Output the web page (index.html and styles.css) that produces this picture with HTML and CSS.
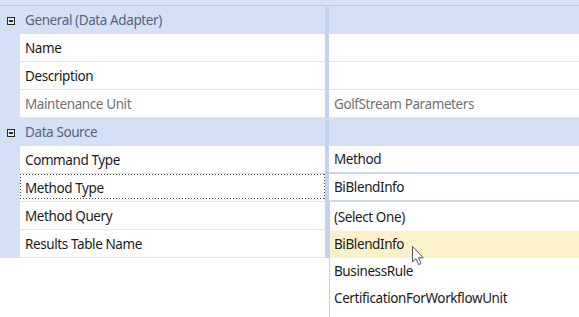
FILE: index.html
```html
<!DOCTYPE html>
<html>
<head>
<meta charset="utf-8">
<link rel="stylesheet" href="styles.css">
</head>
<body>
<div class="pg">
  <div class="topband"></div>
  <div class="grid">
    <div class="cat">
      <div class="gut"><span class="minus"></span></div>
      <div class="cat-name">General (Data Adapter)</div>
      <div class="div"></div>
      <div class="cat-val"></div>
    </div>
    <div class="row">
      <div class="gut"></div>
      <div class="name">Name</div>
      <div class="div"></div>
      <div class="val"></div>
    </div>
    <div class="row">
      <div class="gut"></div>
      <div class="name">Description</div>
      <div class="div"></div>
      <div class="val"></div>
    </div>
    <div class="row">
      <div class="gut"></div>
      <div class="name ro">Maintenance Unit</div>
      <div class="div"></div>
      <div class="val ro">GolfStream Parameters</div>
    </div>
    <div class="cat">
      <div class="gut"><span class="minus"></span></div>
      <div class="cat-name">Data Source</div>
      <div class="div"></div>
      <div class="cat-val"></div>
    </div>
    <div class="row">
      <div class="gut"></div>
      <div class="name">Command Type</div>
      <div class="div"></div>
      <div class="val edit">Method</div>
    </div>
    <div class="row">
      <div class="gut"></div>
      <div class="name focus">Method Type</div>
      <div class="div"></div>
      <div class="val edit">BiBlendInfo</div>
    </div>
    <div class="row">
      <div class="gut"></div>
      <div class="name">Method Query</div>
      <div class="div"></div>
      <div class="val"></div>
    </div>
    <div class="row">
      <div class="gut"></div>
      <div class="name">Results Table Name</div>
      <div class="div"></div>
      <div class="val"></div>
    </div>
  </div>
  <ul class="dropdown">
    <li>(Select One)</li>
    <li class="hot">BiBlendInfo</li>
    <li>BusinessRule</li>
    <li>CertificationForWorkflowUnit</li>
  </ul>
  <svg class="cursor" width="14" height="22" viewBox="0 0 14 22">
    <path d="M1.5 1.5 L1.5 17 L5 13.6 L7.6 19.6 L10 18.6 L7.5 12.8 L12.3 12.8 Z" fill="#fff" stroke="#555" stroke-width="1" stroke-linejoin="round"/>
  </svg>
</div>
</body>
</html>
```
FILE: styles.css
```css
* { box-sizing: border-box; }
html, body { margin: 0; padding: 0; background: #fff; }
body {
  font-family: "Noto Sans", "Open Sans", sans-serif;
  font-size: 13.5px;
  letter-spacing: -0.4px;
  color: #1b1b24;
}
.pg {
  position: relative;
  width: 579px;
  height: 317px;
  overflow: hidden;
  background: #fff;
}
.topband {
  height: 6px;
  background: #d7e2f6;
  border-bottom: 1px solid #bccbe7;
}
.grid { display: flex; flex-direction: column; }
.cat, .row {
  display: flex;
  height: 28px;
}
.gut {
  width: 20px;
  flex: none;
  background: #d4e0f5;
  display: flex;
  align-items: center;
  justify-content: flex-start;
}
.minus {
  display: block;
  width: 8px;
  height: 8px;
  margin: 2px 0 0 7px;
  border: 1px solid #2a2a2a;
  background: linear-gradient(#2a2a2a, #2a2a2a) center / 4px 2px no-repeat, #e4eaf6;
}
.cat { background: #d4e0f5; }
.cat-name {
  width: 305px;
  padding: 1px 0 0 5px;
  line-height: 27px;
  color: #56657f;
}
.cat-val { flex: 1; }
.div {
  width: 4px;
  flex: none;
  background: #c4d3ed;
}
.cat .div { margin-top: 1px; }
.name {
  width: 305px;
  flex: none;
  padding: 1px 0 0 5px;
  line-height: 26px;
  border-bottom: 1px solid #dfe7f5;
  background: #fff;
  position: relative;
}
.val {
  flex: 1;
  padding: 1px 0 0 5px;
  line-height: 26px;
  border-bottom: 1px solid #dfe7f5;
  background: #fff;
}
.val.edit {
  border-bottom: 2px solid #c9d7f1;
  line-height: 25px;
}
.ro { color: #717171; }
.focus::after {
  content: "";
  position: absolute;
  left: 0; right: 0; top: 0; bottom: 2px;
  background:
    repeating-linear-gradient(90deg, #555 0 1px, transparent 1px 3px) top / 100% 1px no-repeat,
    repeating-linear-gradient(90deg, #555 0 1px, transparent 1px 3px) bottom / 100% 1px no-repeat,
    repeating-linear-gradient(180deg, #555 0 1px, transparent 1px 3px) left / 1px 100% no-repeat,
    repeating-linear-gradient(180deg, #555 0 1px, transparent 1px 3px) right / 1px 100% no-repeat;
}
.dropdown {
  position: absolute;
  left: 329px;
  top: 202px;
  width: 250px;
  bottom: 0;
  margin: 0;
  padding: 2px 0 0 0;
  list-style: none;
  background: #fff;
  border-left: 1px solid #c6d2ea;
}
.dropdown li {
  height: 27px;
  line-height: 27px;
  padding-left: 4px;
}
.dropdown li.hot { background: #fdf1c9; }
.cursor {
  position: absolute;
  left: 411px;
  top: 245px;
}
```
